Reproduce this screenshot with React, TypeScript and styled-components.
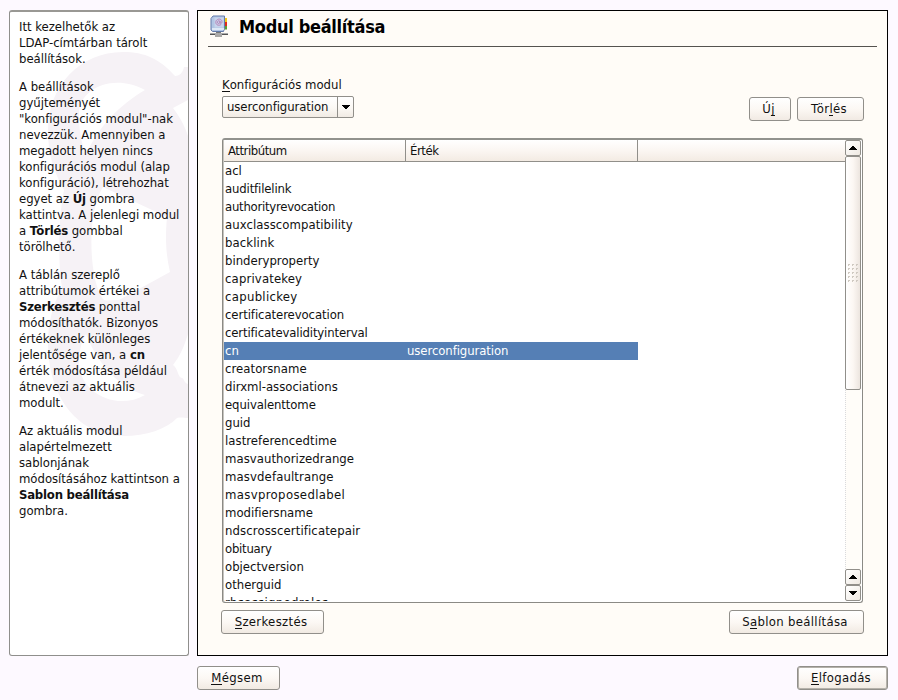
import React from 'react';
import styled, { createGlobalStyle } from 'styled-components';

const GlobalStyle = createGlobalStyle`
  * { box-sizing: border-box; }
  body {
    margin: 0;
    background: #fdf9ff;
    color: #111;
    font: 13px/16px 'DejaVu Sans Condensed', 'DejaVu Sans', sans-serif;
    font-variant-ligatures: none;
  }
  p { margin: 0; }
  b { letter-spacing: -0.22px; }
`;

const Window = styled.div`
  display: grid;
  grid-template-columns: 180px 691px;
  grid-template-rows: 646px 24px;
  column-gap: 8px;
  row-gap: 10px;
  width: 898px;
  height: 700px;
  padding: 10px 10px 10px 9px;
  overflow: hidden;
`;

const HelpPanel = styled.aside`
  position: relative;
  border: 1px solid #8f8f8c;
  border-top-width: 2px;
  border-top-color: #999894;
  border-radius: 3px;
  background: #fff;
  overflow: hidden;
`;

const Watermark = styled.svg`
  position: absolute;
  left: 0;
  top: 0;
`;

const HelpText = styled.div`
  position: relative;
  display: flex;
  flex-direction: column;
  gap: 12px;
  padding: 7px 0 0 9px;
  white-space: nowrap;
  letter-spacing: -0.03px;
`;

const Main = styled.main`
  display: flex;
  flex-direction: column;
  border: 1px solid #000;
  background: #fffcf7;
  padding: 0 10px;
`;

const Header = styled.header`
  display: flex;
  height: 36px;
  padding: 3px 0 0 1px;
  border-bottom: 1px solid #55534f;
`;

const Title = styled.h1`
  margin: 2px 0 0 8px;
  font-size: 18px;
  line-height: 22px;
  font-weight: bold;
  letter-spacing: -0.3px;
  color: #000;
`;

const Form = styled.div`
  display: flex;
  flex-direction: column;
  padding: 30px 14px 0;
`;

const Row = styled.div<{ $top?: number }>`
  display: flex;
  justify-content: space-between;
  margin: ${p => p.$top || 0}px -1px 0;
`;

const Field = styled.div`
  display: flex;
  flex-direction: column;
  gap: 3px;
  margin: 0 0 3px 1px;
`;

const Combo = styled.div`
  display: flex;
  width: 132px;
  height: 22px;
  border: 1px solid #918f8a;
  border-radius: 2px;
  background: linear-gradient(#fff, #fbf8f4 55%, #f1ebe4);
`;

const ComboValue = styled.span`
  flex: 1;
  padding-left: 4px;
  line-height: 20px;
  letter-spacing: -0.08px;
`;

const ComboArrow = styled.span`
  display: flex;
  align-items: center;
  justify-content: center;
  width: 16px;
  border-left: 1px solid #918f8a;
`;

const Group = styled.div`
  display: flex;
  align-self: flex-end;
  gap: 6px;
`;

const Button = styled.button<{ $w: number; $primary?: boolean }>`
  width: ${p => p.$w}px;
  height: 24px;
  padding: 0 3px 0 0;
  border: 1px solid #918f8a;
  border-radius: 3px;
  background: linear-gradient(#fff, #fcf8f4 50%, #f1eae3);
  box-shadow: ${p => (p.$primary ? 'inset 0 0 0 1px #b5b1aa' : 'none')};
  font: inherit;
  letter-spacing: 0.32px;
  color: inherit;
  white-space: nowrap;
`;

const Key = styled.span`
  box-shadow: 0 -1px 0 #111 inset;
  display: inline-block;
  line-height: 14px;
  height: 14px;
`;

const Table = styled.div`
  display: grid;
  grid-template-columns: 621px 16px;
  width: 641px;
  height: 465px;
  margin-top: 17px;
  border: 1px solid #8b8a85;
  border-top: 2px solid #92928d;
  border-radius: 3px;
  padding-left: 1px;
  background: #fff;
  box-shadow: inset 1px 0 0 #c6c4bf;
  overflow: hidden;
`;

const List = styled.div`
  height: 461px;
  overflow: hidden;
`;

const Heads = styled.div`
  display: grid;
  grid-template-columns: 181px 232px 1fr;
  height: 22px;
  border-bottom: 1px solid #918f8a;
  background: linear-gradient(#fff, #fbf6f2 50%, #f3ebe3);
`;

const Head = styled.div`
  padding-left: 4px;
  line-height: 21px;
  letter-spacing: -0.45px;
  & + & { border-left: 1px solid #918f8a; }
`;

const Item = styled.div<{ $selected: boolean }>`
  display: grid;
  grid-template-columns: 182px 232px;
  width: 414px;
  height: 18px;
  line-height: 17px;
  background: ${p => (p.$selected ? '#557fb5' : 'transparent')};
  color: ${p => (p.$selected ? '#fff' : 'inherit')};
`;

const Cell = styled.span<{ $spacing?: number }>`
  padding-left: 1px;
  letter-spacing: ${p => p.$spacing || 0}px;
`;

const Scrollbar = styled.div`
  display: flex;
  flex-direction: column;
  height: 461px;
  background: #fffdf9;
`;

const ScrollButton = styled.div`
  display: flex;
  flex: none;
  align-items: center;
  justify-content: center;
  height: 16px;
  border: 1px solid #918f8a;
  border-radius: 2px;
  background: linear-gradient(135deg, #fff, #efe9e2);
`;

const Thumb = styled.div`
  display: flex;
  flex: none;
  align-items: center;
  justify-content: center;
  height: 234px;
  border: 1px solid #918f8a;
  border-radius: 2px;
  background: linear-gradient(90deg, #fff, #fcf7f3 50%, #ece5df);
`;

const Trough = styled.div`
  flex: 1;
  border-left: 1px dotted #d9dadd;
`;

const Footer = styled.footer`
  grid-column: 2;
  display: flex;
  justify-content: space-between;
`;

const Arrow = ({ up }: { up?: boolean }) => (
  <svg width="8" height="4" viewBox="0 0 8 4" shapeRendering="crispEdges">
    <path d={up ? 'M3 0h2v1h1v1h1v1h1v1H0V3h1V2h1V1h1z' : 'M0 0h8v1H7v1H6v1H5v1H3V3H2V2H1V1H0z'} />
  </svg>
);

const Grip = () => (
  <svg width="11" height="18" viewBox="0 0 11 18" shapeRendering="crispEdges">
    {[0, 4, 8, 12, 16].map(y =>
      [0, 4, 8].map(x => <path key={`${x}-${y}`} d={`M${x} ${y}h2v1h-1v1h-1z`} fill="#cfc9c1" />),
    )}
  </svg>
);

const AddressBookIcon = () => (
  <svg width="22" height="24" viewBox="0 0 22 24">
    <path d="M15 4h3v4h-3z" fill="#f3c61b" />
    <path d="M15 8h3v4h-3z" fill="#e02a1c" />
    <path d="M15 12h3v3.500h-3z" fill="#5c9f35" />
    <path d="M4 2h11.500v12.500l-1 3H3.500L2 16V4.500z" fill="#b2c6e4" stroke="#637baa" />
    <path d="M5.500 3.500h9v10h-9z" fill="#c7d4ec" />
    <path d="M3 15h12" stroke="#edf3fc" strokeWidth="1.500" />
    <path d="M12.200 10.300C10 12.300 6.800 11 6.800 8.300 6.800 4.300 13 4 13 7.700c0 2-2 2.200-2 .8V6.800M11 8c0 2-2.600 2-2.600.2S11 6.200 11 8.200" fill="none" stroke="#b783b8" />
    <path d="M7 18h5v2.500H7z" fill="#777" />
    <path d="M1 20h18" stroke="#aaa" strokeWidth="2" />
    <path d="M1 20.500h5M13 20.500h6M6 22h7" stroke="#555" />
  </svg>
);

const names = `acl auditfilelink authorityrevocation auxclasscompatibility backlink binderyproperty
caprivatekey capublickey certificaterevocation certificatevalidityinterval cn creatorsname
dirxml-associations equivalenttome guid lastreferencedtime masvauthorizedrange masvdefaultrange
masvproposedlabel modifiersname ndscrosscertificatepair obituary objectversion otherguid
rbsassignedroles`.split(/\s+/);

const tracking: Record<string, number> = {
  auditfilelink: -0.15,
  authorityrevocation: -0.26,
  auxclasscompatibility: 0.06,
  backlink: 0.1,
  caprivatekey: 0.15,
  capublickey: 0.3,
  certificaterevocation: -0.08,
  certificatevalidityinterval: -0.14,
  creatorsname: 0.05,
  equivalenttome: -0.1,
  lastreferencedtime: 0.05,
  masvauthorizedrange: 0.05,
  masvdefaultrange: 0.12,
  masvproposedlabel: 0.35,
  ndscrosscertificatepair: 0.1,
  obituary: -0.25,
  rbsassignedroles: 0.3,
};

const paragraphs: React.ReactNode[][] = [
  ['Itt kezelhetők az', 'LDAP-címtárban tárolt', 'beállítások.'],
  ['A beállítások', 'gyűjteményét', '"konfigurációs modul"-nak', 'nevezzük. Amennyiben a',
    'megadott helyen nincs', 'konfigurációs modul (alap', 'konfiguráció), létrehozhat',
    <>egyet az <b>Új</b> gombra</>, 'kattintva. A jelenlegi modul', <>a <b>Törlés</b> gombbal</>, 'törölhető.'],
  ['A táblán szereplő', 'attribútumok értékei a', <><b>Szerkesztés</b> ponttal</>, 'módosíthatók. Bizonyos',
    'értékeknek különleges', <>jelentősége van, a <b>cn</b></>, 'érték módosítása például',
    'átnevezi az aktuális', 'modult.'],
  ['Az aktuális modul', 'alapértelmezett', 'sablonjának', 'módosításához kattintson a',
    <b>Sablon beállítása</b>, 'gombra.'],
];

export default function App() {
  return (
    <>
      <GlobalStyle />
      <Window>
        <HelpPanel>
          <Watermark width="178" height="643" viewBox="10 12 178 643">
            <path fill="#f6f2f6" fillRule="evenodd" d="M188 67h-4c-1 5-4 9-9 9C160 59 145 52 123 52 80 52 48 86 48 130c0 24 5 40 16 60-6 30-6 73-2 98-10 18-14 36-14 55 0 55 31 93 75 93 24 0 43-7 54-18 4-1 8 0 11 0v-34c-4-1-4-6-6-6-4 0-4-10-9-13 7-9 11-18 15-31V136c-4-12-9-20-15-28l15-8zM145 90c-31-17-66-2-66 24 0 16 2 28 7 41 13-30 34-50 59-65zM103 187l64 30c-2 22-1 38 3 55l-51 28c-9 0-12 1-15 0-14-14-19-85-1-113zM86 334c12 31 34 54 59 61-30 17-66-4-66-32 0-12 2-20 7-29z" />
          </Watermark>
          <HelpText>
            {paragraphs.map((lines, i) => (
              <p key={i}>{lines.map((line, j) => <React.Fragment key={j}>{line}<br /></React.Fragment>)}</p>
            ))}
          </HelpText>
        </HelpPanel>
        <Main>
          <Header>
            <AddressBookIcon />
            <Title>Modul beállítása</Title>
          </Header>
          <Form>
            <Row>
              <Field>
                <span><Key>K</Key>onfigurációs modul</span>
                <Combo>
                  <ComboValue>userconfiguration</ComboValue>
                  <ComboArrow><Arrow /></ComboArrow>
                </Combo>
              </Field>
              <Group>
                <Button $w={42}>Ú<Key>j</Key></Button>
                <Button $w={67}>Tör<Key>l</Key>és</Button>
              </Group>
            </Row>
            <Table>
              <List>
                <Heads><Head>Attribútum</Head><Head>Érték</Head><Head /></Heads>
                {names.map(name => (
                  <Item key={name} $selected={name === 'cn'}>
                    <Cell $spacing={tracking[name]}>{name}</Cell>
                    <Cell $spacing={-0.08}>{name === 'cn' ? 'userconfiguration' : ''}</Cell>
                  </Item>
                ))}
              </List>
              <Scrollbar>
                <ScrollButton><Arrow up /></ScrollButton>
                <Thumb><Grip /></Thumb>
                <Trough />
                <ScrollButton><Arrow up /></ScrollButton>
                <ScrollButton><Arrow /></ScrollButton>
              </Scrollbar>
            </Table>
            <Row $top={7}>
              <Button $w={103}><Key>S</Key>zerkesztés</Button>
              <Button $w={135}>S<Key>a</Key>blon beállítása</Button>
            </Row>
          </Form>
        </Main>
        <Footer>
          <Button $w={83}><Key>M</Key>égsem</Button>
          <Button $w={91} $primary><Key>E</Key>lfogadás</Button>
        </Footer>
      </Window>
    </>
  );
}
